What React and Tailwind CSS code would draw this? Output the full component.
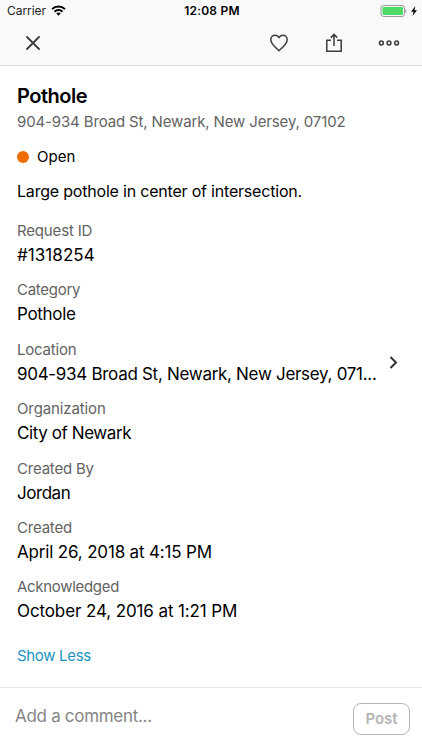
const details = [
  { label: 'Request ID', value: '#1318254', labelTracking: 'tracking-[-0.17px]', tracking: 'tracking-[0.06px]' },
  { label: 'Category', value: 'Pothole', labelTracking: 'tracking-[-0.27px]', tracking: 'tracking-[-0.3px]' },
  { label: 'Location', value: '904-934 Broad St, Newark, New Jersey, 071...', labelTracking: 'tracking-[-0.2px]', tracking: 'tracking-[-0.3px]', link: true },
  { label: 'Organization', value: 'City of Newark', labelTracking: 'tracking-[-0.12px]', tracking: 'tracking-[-0.41px]' },
  { label: 'Created By', value: 'Jordan', labelTracking: 'tracking-[-0.2px]', tracking: 'tracking-[-0.45px]' },
  { label: 'Created', value: 'April 26, 2018 at 4:15 PM', labelTracking: 'tracking-[-0.2px]', tracking: 'tracking-[-0.17px]' },
  { label: 'Acknowledged', value: 'October 24, 2016 at 1:21 PM', labelTracking: 'tracking-[-0.3px]', tracking: 'tracking-[-0.11px]' },
];

function StatusBar() {
  return (
    <div className="grid h-[22px] grid-cols-3 items-center pl-[7px] pr-[5px] text-black">
      <div className="flex items-center gap-[5px]">
        <span className="text-[12px] leading-[22px] tracking-[-0.05px] text-[#222]">Carrier</span>
        <svg className="mb-px" width="15" height="11" viewBox="0 0 15 11" fill="none" stroke="#000" strokeWidth="2">
          <path d="M1 4.1a9.2 9.2 0 0 1 13 0" />
          <path d="M3.5 6.7a5.7 5.7 0 0 1 8 0" />
          <path d="M5.3 8.5a3.1 3.1 0 0 1 4.4 0L7.5 10.7Z" fill="#000" stroke="none" />
        </svg>
      </div>
      <span className="text-center text-[12px] font-semibold leading-[22px] tracking-[0.2px]">12:08 PM</span>
      <div className="flex items-center justify-end gap-[4px]">
        <svg width="27" height="12" viewBox="0 0 27 12">
          <rect x="1" y=".5" width="23.5" height="11" rx="2.5" fill="none" stroke="#9b9b9b" />
          <rect x="2.5" y="2" width="20.5" height="8" rx="1" fill="#4cd964" />
          <path d="M25.3 4q1.3.6 1.3 2t-1.3 2Z" fill="#9b9b9b" />
        </svg>
        <svg width="6" height="10" viewBox="0 0 6 10">
          <path d="M4.5 0 0 5.7h2.6L1.5 10 6 4.3H3.4Z" fill="#000" />
        </svg>
      </div>
    </div>
  );
}

function Toolbar() {
  return (
    <div className="flex h-[41px] items-center justify-between pl-[26px] pr-[22px] text-[#3c3c3c]">
      <svg width="14" height="14" viewBox="0 0 14 14" fill="none" stroke="currentColor" strokeWidth="1.8" strokeLinecap="round">
        <path d="m1 1 12 12M13 1 1 13" />
      </svg>
      <div className="flex items-center">
        <svg className="mr-[38px]" width="18" height="18" viewBox="0 0 18 18" fill="none" stroke="currentColor" strokeWidth="1.5" strokeLinejoin="round">
          <path d="M9 16.7C6.5 14.3 .8 10.2.8 5.8.8 3 2.7 1.2 5 1.2c1.9 0 3.3 1.1 4 2.5.7-1.4 2.1-2.5 4-2.5 2.3 0 4.2 1.8 4.2 4.6 0 4.4-5.7 8.5-8.2 10.9Z" />
        </svg>
        <svg className="mb-px mr-[36px]" width="16" height="19" viewBox="0 0 16 19" fill="none" stroke="currentColor" strokeWidth="1.5">
          <path d="M5 7.2H.8v11h14.4v-11H11M8 13V1.5M4.8 4.6 8 1.4l3.2 3.2" />
        </svg>
        <svg width="22" height="6" viewBox="0 0 22 6" fill="none" stroke="currentColor" strokeWidth="1.5">
          <circle cx="3.4" cy="3" r="1.9" />
          <circle cx="11" cy="3" r="1.9" />
          <circle cx="18.6" cy="3" r="1.9" />
        </svg>
      </div>
    </div>
  );
}

function Detail({ label, value, labelTracking, tracking, link }) {
  return (
    <div className="flex h-[59.4px] items-start justify-between">
      <div className="whitespace-nowrap">
        <div className={`text-[15px] leading-6 text-[#636363] ${labelTracking}`}>{label}</div>
        <div className={`text-[17px] leading-6 text-black ${tracking}`}>{value}</div>
      </div>
      {link && (
        <svg className="mr-[24px] mt-[18.5px] shrink-0" width="9" height="13" viewBox="0 0 9 13" fill="none" stroke="#333" strokeWidth="2">
          <path d="m1.5 1 5.5 5.5L1.5 12" />
        </svg>
      )}
    </div>
  );
}

export default function App() {
  return (
    <div className="flex h-[750px] w-[422px] flex-col overflow-hidden bg-white font-['Inter','Liberation_Sans',sans-serif]">
      <header className="h-[66px] shrink-0 border-b border-[#dedede] bg-[#f9f9f9]">
        <StatusBar />
        <Toolbar />
      </header>
      <main className="flex-1 pl-[17px]">
        <h1 className="mt-[17px] text-[20px] font-semibold leading-[27px] tracking-[-0.5px] text-black">Pothole</h1>
        <p className="text-[15px] leading-6 tracking-[-0.14px] text-[#636363]">904-934 Broad St, Newark, New Jersey, 07102</p>
        <div className="mt-[10.5px] flex h-6 items-center gap-[8px]">
          <span className="size-[12px] rounded-full bg-[#ef6c00]" />
          <span className="text-[15px] leading-6 text-black">Open</span>
        </div>
        <p className="mt-[10.5px] text-[16px] leading-6 tracking-[-0.2px] text-black">Large pothole in center of intersection.</p>
        <div className="mt-4">
          {details.map((item) => (
            <Detail key={item.label} {...item} />
          ))}
        </div>
        <a className="mt-[9.2px] block text-[15px] leading-6 tracking-[-0.33px] text-[#1993c0]">Show Less</a>
      </main>
      <footer className="flex h-[63px] shrink-0 items-center justify-between border-t border-[#e7e7e7] pl-[15px] pr-[12px]">
        <span className="mb-[6px] text-[17px] leading-6 tracking-[-0.3px] text-[#858585]">Add a comment...</span>
        <button className="flex h-[32px] w-[57px] items-center justify-center rounded-[8px] border border-[#b5b5b5] pt-px text-[15px] font-semibold text-[#b5b5b5]">Post</button>
      </footer>
    </div>
  );
}
